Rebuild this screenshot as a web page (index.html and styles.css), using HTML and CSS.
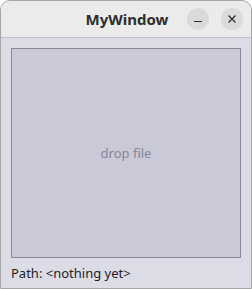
FILE: index.html
```html
<!DOCTYPE html>
<html>
<head>
<meta charset="utf-8">
<link rel="stylesheet" href="styles.css">
</head>
<body>
<div class="window">
  <div class="titlebar">
    <div class="title">MyWindow</div>
    <div class="buttons">
      <div class="btn">
        <svg width="10" height="10" viewBox="0 0 10 10"><path d="M1 7.5H9" stroke="#2e2e2e" stroke-width="1.2"/></svg>
      </div>
      <div class="btn">
        <svg width="10" height="10" viewBox="0 0 10 10"><path d="M1.5 1.5L8.5 8.5M8.5 1.5L1.5 8.5" stroke="#2e2e2e" stroke-width="1.3"/></svg>
      </div>
    </div>
  </div>
  <div class="content">
    <div class="drop">drop file</div>
    <div class="path">Path: &lt;nothing yet&gt;</div>
  </div>
</div>
</body>
</html>
```
FILE: styles.css
```css
html, body { margin: 0; padding: 0; }
body { width: 252px; height: 289px; background: #ffffff; font-family: "Noto Sans", "Open Sans", sans-serif; }
.window {
  box-sizing: border-box;
  width: 252px; height: 289px;
  border: 1px solid #a6a6a6;
  border-radius: 10px 10px 0 0;
  background: #dcdce6;
  display: flex; flex-direction: column;
  overflow: hidden;
}
.titlebar {
  height: 36px;
  flex: none;
  background: #ebebeb;
  border-bottom: 1px solid #c0c0c4;
  position: relative;
  display: flex; align-items: center; justify-content: center;
}
.title { font-weight: bold; font-size: 15px; color: #2e2e2e; margin-left: 2px; }
.buttons { position: absolute; right: 8px; top: 7px; display: flex; gap: 12px; }
.btn { width: 22px; height: 22px; border-radius: 50%; background: #dadada; display: flex; align-items: center; justify-content: center; }
.content { flex: 1; padding: 10px 10px 0 10px; display: flex; flex-direction: column; }
.drop {
  height: 208px;
  border: 1px solid #8a8a96;
  background: #c9c9d8;
  display: flex; align-items: center; justify-content: center;
  color: #868694; font-size: 13px;
}
.path { font-size: 13px; color: #1e1e1e; margin-top: 6px; }
```
